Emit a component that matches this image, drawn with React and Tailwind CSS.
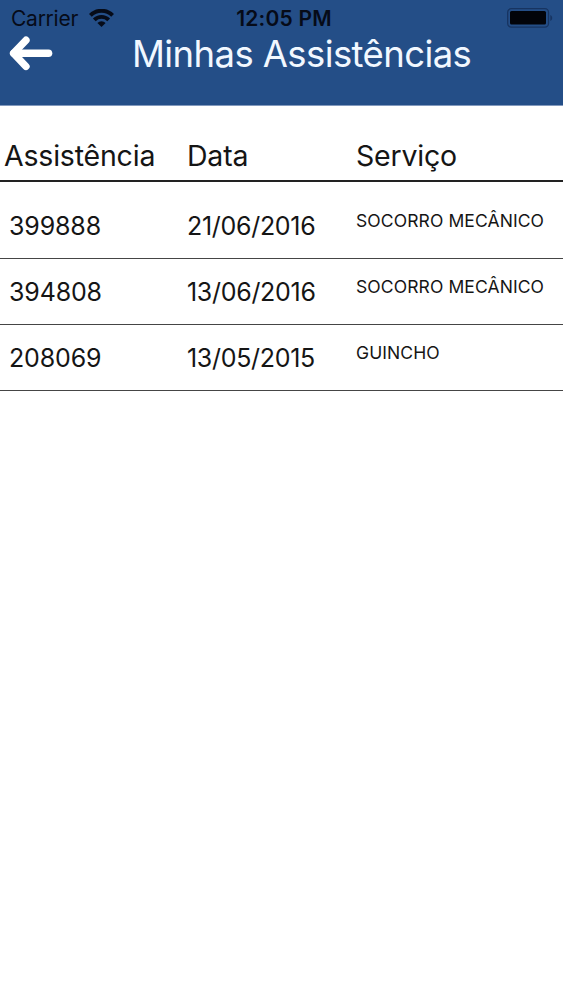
const rows = [
  { id: "399888", date: "21/06/2016", service: "SOCORRO MECÂNICO" },
  { id: "394808", date: "13/06/2016", service: "SOCORRO MECÂNICO" },
  { id: "208069", date: "13/05/2015", service: "GUINCHO" },
];

function WifiIcon() {
  return (
    <svg className="ml-[11px] h-[18px] w-[25px]" viewBox="0 0 25 18" fill="none" stroke="#060b18" strokeWidth="3.9">
      <path d="M1.400 6.300a15.800 15.800 0 0 1 22.200 0" />
      <path d="M5.300 10.900a10.200 10.200 0 0 1 14.400 0" />
      <path d="M12.500 17.900 8.400 14a5.700 5.700 0 0 1 8.200 0Z" fill="#060b18" stroke="none" />
    </svg>
  );
}

function BatteryIcon() {
  return (
    <svg className="h-[20px] w-[46px]" viewBox="0 0 46 20">
      <rect x="0.7" y="0.7" width="40.8" height="18.4" rx="3.6" fill="none" stroke="#173461" strokeWidth="1.3" />
      <rect x="3" y="3" width="36" height="13.6" rx="1.6" fill="#02040a" />
      <path d="M43.300 7v6c1.200-.6 1.900-1.700 1.900-3s-.7-2.400-1.900-3Z" fill="#173461" />
    </svg>
  );
}

function BackArrow() {
  return (
    <svg className="h-[36px] w-[44px]" viewBox="0 0 44 36" fill="none" stroke="#fff" strokeLinecap="round" strokeLinejoin="round">
      <path d="M5 17.300h34.500" strokeWidth="7.600" />
      <path d="M17 4.200 4.500 17.300 17 30.400" strokeWidth="7.300" />
    </svg>
  );
}

export default function App() {
  return (
    <div className="min-h-[1000px] w-[563px] overflow-hidden bg-white font-['Inter','Liberation_Sans',sans-serif] text-[#151515]">
      <header className="h-[106px] border-b border-[#8299bd] bg-[#244e87]">
        <div className="grid h-[36px] grid-cols-3 items-center pr-[10px] pl-[11px] text-[#060b18]">
          <div className="flex items-center">
            <span className="pt-[2px] text-[21px] leading-[34px] tracking-[-0.25px]">Carrier</span>
            <WifiIcon />
          </div>
          <span className="pt-[2px] pl-[4px] text-center text-[21px] leading-[34px] font-semibold tracking-[0.2px] whitespace-nowrap">12:05 PM</span>
          <div className="flex justify-end">
            <BatteryIcon />
          </div>
        </div>
        <div className="flex h-[36px] items-center pl-[9px]">
          <button type="button" aria-label="Voltar">
            <BackArrow />
          </button>
          <h1 className="ml-[79px] text-[36.5px] leading-[36px] font-normal tracking-[-0.6px] whitespace-nowrap text-[#f2f8ff]">Minhas Assistências</h1>
        </div>
      </header>

      <main>
        <div className="grid h-[76px] grid-cols-[183px_169px_1fr] border-b-2 border-[#222] pt-[32px] pl-[4px] text-[28.5px] leading-[36px] tracking-[-0.2px]">
          <span>Assistência</span>
          <span>Data</span>
          <span>Serviço</span>
        </div>
        <div className="pt-[11px]">
          {rows.map((row) => (
            <div key={row.id} className="grid h-[66px] grid-cols-[178px_169px_1fr] border-b border-[#454545] pl-[9px] text-[25px] leading-[66px] tracking-[-0.3px]">
              <span className="tracking-[-0.15px]">{row.id}</span>
              <span>{row.date}</span>
              <span className="text-[17.5px] leading-[55px] tracking-[0.1px] whitespace-nowrap">{row.service}</span>
            </div>
          ))}
        </div>
      </main>
    </div>
  );
}
